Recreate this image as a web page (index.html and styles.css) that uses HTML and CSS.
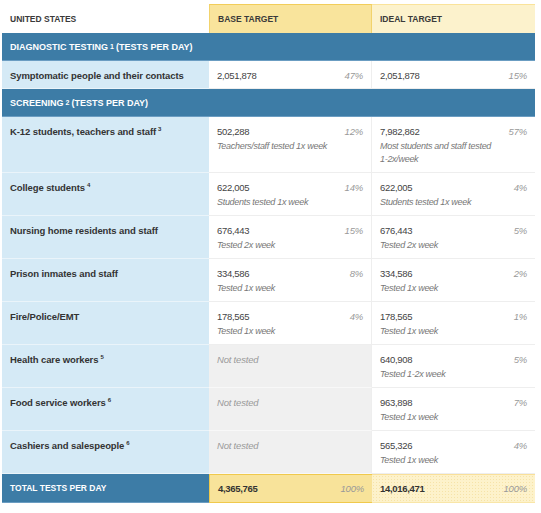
FILE: index.html
```html
<!DOCTYPE html>
<html>
<head>
<meta charset="utf-8">
<link rel="stylesheet" href="styles.css">
</head>
<body>
<div class="table">
  <div class="hcell hlabel">United States</div>
  <div class="hcell hbase">Base target</div>
  <div class="hcell hideal">Ideal target</div>

  <div class="band">Diagnostic testing<sup>1</sup> (tests per day)</div>

  <div class="lcell single">Symptomatic people and their contacts</div>
  <div class="dcell base single"><div class="top"><span class="num">2,051,878</span><span class="pct">47%</span></div></div>
  <div class="dcell ideal single"><div class="top"><span class="num">2,051,878</span><span class="pct">15%</span></div></div>

  <div class="band">Screening<sup>2</sup> (tests per day)</div>

  <div class="lcell">K-12 students, teachers and staff<sup>3</sup></div>
  <div class="dcell base"><div class="top"><span class="num">502,288</span><span class="pct">12%</span></div><div class="note">Teachers/staff tested 1x week</div></div>
  <div class="dcell ideal"><div class="top"><span class="num">7,982,862</span><span class="pct">57%</span></div><div class="note">Most students and staff tested<br>1-2x/week</div></div>

  <div class="lcell">College students<sup>4</sup></div>
  <div class="dcell base"><div class="top"><span class="num">622,005</span><span class="pct">14%</span></div><div class="note">Students tested 1x week</div></div>
  <div class="dcell ideal"><div class="top"><span class="num">622,005</span><span class="pct">4%</span></div><div class="note">Students tested 1x week</div></div>

  <div class="lcell">Nursing home residents and staff</div>
  <div class="dcell base"><div class="top"><span class="num">676,443</span><span class="pct">15%</span></div><div class="note">Tested 2x week</div></div>
  <div class="dcell ideal"><div class="top"><span class="num">676,443</span><span class="pct">5%</span></div><div class="note">Tested 2x week</div></div>

  <div class="lcell">Prison inmates and staff</div>
  <div class="dcell base"><div class="top"><span class="num">334,586</span><span class="pct">8%</span></div><div class="note">Tested 1x week</div></div>
  <div class="dcell ideal"><div class="top"><span class="num">334,586</span><span class="pct">2%</span></div><div class="note">Tested 1x week</div></div>

  <div class="lcell">Fire/Police/EMT</div>
  <div class="dcell base"><div class="top"><span class="num">178,565</span><span class="pct">4%</span></div><div class="note">Tested 1x week</div></div>
  <div class="dcell ideal"><div class="top"><span class="num">178,565</span><span class="pct">1%</span></div><div class="note">Tested 1x week</div></div>

  <div class="lcell">Health care workers<sup>5</sup></div>
  <div class="dcell base none"><div class="note">Not tested</div></div>
  <div class="dcell ideal"><div class="top"><span class="num">640,908</span><span class="pct">5%</span></div><div class="note">Tested 1-2x week</div></div>

  <div class="lcell">Food service workers<sup>6</sup></div>
  <div class="dcell base none"><div class="note">Not tested</div></div>
  <div class="dcell ideal"><div class="top"><span class="num">963,898</span><span class="pct">7%</span></div><div class="note">Tested 1x week</div></div>

  <div class="lcell">Cashiers and salespeople<sup>6</sup></div>
  <div class="dcell base none"><div class="note">Not tested</div></div>
  <div class="dcell ideal"><div class="top"><span class="num">565,326</span><span class="pct">4%</span></div><div class="note">Tested 1x week</div></div>

  <div class="tlabel">Total tests per day</div>
  <div class="tcell tbase"><span class="num">4,365,765</span><span class="pct">100%</span></div>
  <div class="tcell tideal"><span class="num">14,016,471</span><span class="pct">100%</span></div>
</div>
</body>
</html>
```

FILE: styles.css
```css
body {
  margin: 0;
  background: #fff;
}

.table {
  display: grid;
  grid-template-columns: 207px 163px 163px;
  width: 533px;
  margin: 4px 0 0 2px;
  font-family: "Liberation Sans", Arial, sans-serif;
  color: #333;
}

.hcell {
  height: 28px;
  display: flex;
  align-items: center;
  padding: 0 8px;
  font-size: 8.5px;
  font-weight: bold;
  text-transform: uppercase;
  color: #3a3a3a;
  border-top: 1px solid transparent;
}

.hbase {
  background: #f9e49c;
  border-top: 1px solid #f2cd5a;
  border-left: 1px solid #f2d36c;
  border-right: 1px solid #f2d36c;
}

.hideal {
  background: #fcf2cc;
  border-top: 1px solid #fae39a;
}

.band {
  grid-column: 1 / -1;
  height: 27px;
  display: flex;
  align-items: center;
  padding: 0 8px;
  background: #3d7ca6;
  border-bottom: 1px solid #6b9dc2;
  color: #fff;
  font-size: 9px;
  font-weight: bold;
  text-transform: uppercase;
}

.band sup {
  font-size: 7px;
  margin: 0 2px 0 2px;
  vertical-align: 3px;
  line-height: 0;
}

.lcell sup {
  font-size: 6px;
  margin: 0 1px 0 2px;
  vertical-align: 4px;
  line-height: 0;
}

.lcell {
  background: #d5eaf6;
  border-bottom: 1px solid #eaf4fa;
  padding: 7px 8px 6px;
  font-size: 9.5px;
  letter-spacing: -0.1px;
  font-weight: bold;
  line-height: 16px;
  color: #333;
}

.dcell {
  background: #fff;
  border-bottom: 1px solid #eeeeee;
  padding: 7px 8px 6px;
}

.dcell.base {
  border-right: 1px solid #eeeeee;
}

.single {
  padding-bottom: 4px;
}

.dcell.none {
  background: #f0f0f0;
  border-bottom-color: #f8f8f8;
}

.dcell.none .note {
  line-height: 16px;
  font-size: 9.5px;
  letter-spacing: -0.2px;
  color: #9a9a9a;
}

.top {
  display: flex;
  justify-content: space-between;
  align-items: baseline;
  line-height: 16px;
}

.num {
  font-size: 9.5px;
  letter-spacing: -0.3px;
  color: #444;
}

.pct {
  font-size: 9.5px;
  letter-spacing: -0.2px;
  font-style: italic;
  color: #999;
}

.note {
  font-size: 9px;
  letter-spacing: -0.3px;
  font-style: italic;
  line-height: 13px;
  color: #777;
}

.tlabel {
  height: 28px;
  display: flex;
  align-items: center;
  padding: 0 8px;
  background: #3d7ca6;
  border-bottom: 1px solid #6b9dc2;
  color: #fff;
  font-size: 8.5px;
  font-weight: bold;
  text-transform: uppercase;
}

.tcell {
  height: 27px;
  display: flex;
  align-items: center;
  justify-content: space-between;
  padding: 0 8px;
}

.tcell .num {
  font-weight: bold;
  color: #333;
}

.tbase {
  background: #f8e39a;
  border-top: 1px solid #f0c94c;
  border-bottom: 1px solid #f0c94c;
  border-left: 1px solid #f0c94c;
}

.tideal {
  background-color: #fdf2cb;
  background-image: radial-gradient(#f6e3a8 0.6px, transparent 0.8px);
  background-size: 3px 3px;
  border-top: 1px solid #f9e09a;
  border-bottom: 1px solid #f9e6a8;
}
```
